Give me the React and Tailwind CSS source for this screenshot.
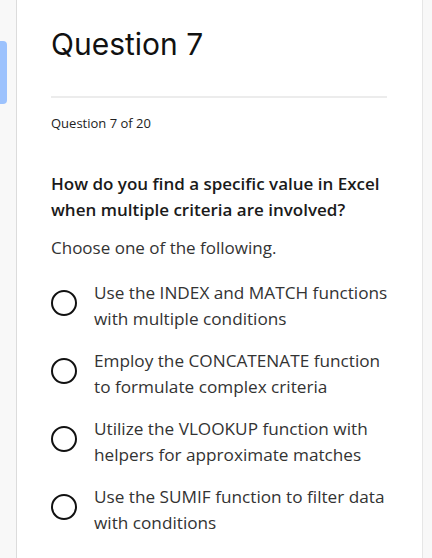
const options = [
  'Use the INDEX and MATCH functions with multiple conditions',
  'Employ the CONCATENATE function to formulate complex criteria',
  'Utilize the VLOOKUP function with helpers for approximate matches',
  'Use the SUMIF function to filter data with conditions',
];

const Radio = () => (
  <span className="mt-[10px] block h-[26px] w-[26px] shrink-0 rounded-full border-2 border-[#111]" />
);

export default function App() {
  return (
    <div className="flex min-h-[558px] bg-[#f8f8f8]">
      <div className="relative w-[17px] shrink-0 border-r border-[#dcdcdc]">
        <div className="absolute left-0 top-[41px] h-[63px] w-[7px] rounded-r-[4px] bg-[#9cc2fd]" />
      </div>
      <main className="w-[406px] shrink-0 border-r border-[#e6e6e6] bg-white px-[34px] pt-[25px]">
        <h1
          className="text-[30px] leading-[38px] text-[#111]"
          style={{ fontFamily: 'Inter, sans-serif' }}
        >
          Question 7
        </h1>
        <hr className="mt-[33px] mr-[1px] border-t-2 border-[#ececec]" />
        <div style={{ fontFamily: '"Open Sans", sans-serif' }}>
          <p className="mt-[15px] text-[13px] leading-[20px] text-[#222]">Question 7 of 20</p>
          <p className="mt-[38px] text-[17px] font-semibold leading-[26px] text-[#1a1a1a]">
            How do you find a specific value in Excel when multiple criteria are involved?
          </p>
          <p className="mt-[12px] text-[17px] leading-[26px] text-[#333]">
            Choose one of the following.
          </p>
          <ul className="mt-[19px] -mr-[5px] flex flex-col gap-[16px]">
            {options.map((text) => (
              <li key={text} className="flex items-start gap-[17px]">
                <Radio />
                <span className="text-[17.2px] leading-[26px] text-[#333]">{text}</span>
              </li>
            ))}
          </ul>
        </div>
      </main>
    </div>
  );
}
